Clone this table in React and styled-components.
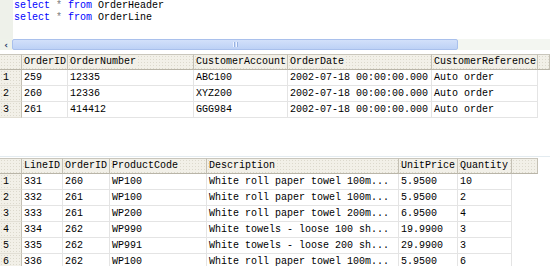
import React from "react";
import styled, { createGlobalStyle, css } from "styled-components";

const GlobalStyle = createGlobalStyle`
  html, body {
    margin: 0;
    padding: 0;
    background: #fff;
  }
  body {
    width: 550px;
    height: 266px;
    overflow: hidden;
    font-family: "Liberation Mono", "Courier New", monospace;
    font-size: 10px;
    color: #000;
  }
`;

// faint dotted texture of the old XP grid headers
const dotted = css`
  background-color: #f2f0e8;
  background-image: radial-gradient(circle, #dcd9cd 0.7px, transparent 0.9px);
  background-size: 3px 3px;
`;

const Window = styled.div`
  width: 550px;
  height: 266px;
  overflow: hidden;
  background: #fff;
`;

const Editor = styled.div`
  display: flex;
  height: 39px;
`;

const Gutter = styled.div`
  width: 13px;
  background: #eef1ea;
`;

const Code = styled.div`
  padding-left: 1px;
  line-height: 12px;
  white-space: pre;
`;

const Token = styled.span`
  color: ${(p) => (p.$kind === "op" ? "#808080" : p.$kind === "kw" ? "#0000ff" : "#000")};
`;

const HScroll = styled.div`
  display: flex;
  height: 11px;
  background: #f3f6f1;
`;

const ArrowButton = styled.div`
  width: 12px;
  display: flex;
  align-items: center;
  justify-content: center;
  background: #eef2ea;
  color: #2a3a6a;
  font-size: 9px;
  font-weight: bold;
  font-family: "DejaVu Sans", sans-serif;
`;

const Thumb = styled.div`
  box-sizing: border-box;
  width: 446px;
  display: flex;
  align-items: center;
  justify-content: center;
  gap: 1px;
  background: linear-gradient(#d2e0fa, #bdd1f5);
  border: 1px solid #a9c0ec;
  border-radius: 2px;
`;

const GripLine = styled.span`
  width: 1px;
  height: 5px;
  background: #eef4ff;
  border-right: 1px solid #98b2e2;
`;

const Track = styled.div`
  flex: 1;
`;

const Table = styled.div`
  display: flex;
  flex-direction: column;
  margin-top: ${(p) => p.$top}px;
`;

const Divider = styled.div`
  height: 1px;
  margin-top: ${(p) => p.$top}px;
  background: #e3ebf0;
`;

const Row = styled.div`
  display: flex;
  height: 16px;
  flex-shrink: 0;
`;

const HeaderCell = styled.div`
  ${dotted}
  box-sizing: border-box;
  width: ${(p) => p.$w}px;
  height: 16px;
  padding-left: 2px;
  line-height: 14px;
  white-space: nowrap;
  overflow: hidden;
  border-top: 1px solid #c9c6bc;
  border-right: 1px solid #c4c0b4;
  border-bottom: 1px solid #b9b5a8;
`;

const Label = styled.span`
  background: #f2f0e8;
  padding-right: 1px;
`;

const RowHead = styled.div`
  ${dotted}
  box-sizing: border-box;
  width: 22px;
  height: 16px;
  padding-left: 3px;
  line-height: 15px;
  border-right: 1px solid #c4c0b4;
  border-bottom: 1px solid #e2dfd5;
`;

const Cell = styled.div`
  box-sizing: border-box;
  width: ${(p) => p.$w}px;
  height: 16px;
  padding-left: 2px;
  line-height: 15px;
  white-space: nowrap;
  overflow: hidden;
  border-right: 1px solid #e4e4e4;
  border-bottom: 1px solid #e4e4e4;
`;

const headerCols = [
  { name: "OrderID", w: 46 },
  { name: "OrderNumber", w: 126 },
  { name: "CustomerAccount", w: 94 },
  { name: "OrderDate", w: 144 },
  { name: "CustomerReference", w: 106 },
];

const headerRows = [
  ["259", "12335", "ABC100", "2002-07-18 00:00:00.000", "Auto order"],
  ["260", "12336", "XYZ200", "2002-07-18 00:00:00.000", "Auto order"],
  ["261", "414412", "GGG984", "2002-07-18 00:00:00.000", "Auto order"],
];

const lineCols = [
  { name: "LineID", w: 41 },
  { name: "OrderID", w: 47 },
  { name: "ProductCode", w: 97 },
  { name: "Description", w: 192 },
  { name: "UnitPrice", w: 59 },
  { name: "Quantity", w: 54 },
];

const lineRows = [
  ["331", "260", "WP100", "White roll paper towel 100m...", "5.9500", "10"],
  ["332", "261", "WP100", "White roll paper towel 100m...", "5.9500", "2"],
  ["333", "261", "WP200", "White roll paper towel 200m...", "6.9500", "4"],
  ["334", "262", "WP990", "White towels - loose 100 sh...", "19.9900", "3"],
  ["335", "262", "WP991", "White towels - loose 200 sh...", "29.9900", "3"],
  ["336", "262", "WP100", "White roll paper towel 100m...", "5.9500", "6"],
];

const ResultGrid = ({ cols, rows, filler, top }) => (
  <Table $top={top}>
    <Row>
      <HeaderCell $w={22} />
      {cols.map((c) => (
        <HeaderCell key={c.name} $w={c.w}>
          <Label>{c.name}</Label>
        </HeaderCell>
      ))}
      <HeaderCell $w={filler} />
    </Row>
    {rows.map((r, i) => (
      <Row key={i}>
        <RowHead>
          <Label>{i + 1}</Label>
        </RowHead>
        {r.map((v, j) => (
          <Cell key={j} $w={cols[j].w}>
            {v}
          </Cell>
        ))}
      </Row>
    ))}
  </Table>
);

const Query = ({ table }) => (
  <div>
    <Token $kind="kw">select</Token> <Token $kind="op">*</Token>{" "}
    <Token $kind="kw">from</Token> <Token>{table}</Token>
  </div>
);

export default function App() {
  return (
    <>
      <GlobalStyle />
      <Window>
        <Editor>
          <Gutter />
          <Code>
            <Query table="OrderHeader" />
            <Query table="OrderLine" />
          </Code>
        </Editor>
        <HScroll>
          <ArrowButton>‹</ArrowButton>
          <Thumb>
            <GripLine />
            <GripLine />
          </Thumb>
          <Track />
        </HScroll>
        <ResultGrid cols={headerCols} rows={headerRows} filler={12} top={4} />
        <Divider $top={38} />
        <ResultGrid cols={lineCols} rows={lineRows} filler={26} top={1} />
      </Window>
    </>
  );
}
